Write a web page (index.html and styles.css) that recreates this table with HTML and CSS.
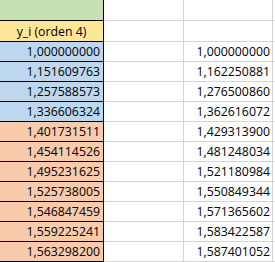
FILE: index.html
```html
<!DOCTYPE html>
<html>
<head>
<meta charset="utf-8">
<link rel="stylesheet" href="styles.css">
</head>
<body>
<div class="sheet">
  <div class="c a green"></div><div class="c b"></div><div class="c d"></div><div class="c e"></div>
  <div class="c a yellow head">y_i (orden 4)</div><div class="c b"></div><div class="c d"></div><div class="c e"></div>

  <div class="c a blue">1,000000000</div><div class="c b"></div><div class="c d">1,000000000</div><div class="c e"></div>
  <div class="c a blue">1,151609763</div><div class="c b"></div><div class="c d">1,162250881</div><div class="c e"></div>
  <div class="c a blue">1,257588573</div><div class="c b"></div><div class="c d">1,276500860</div><div class="c e"></div>
  <div class="c a blue">1,336606324</div><div class="c b"></div><div class="c d">1,362616072</div><div class="c e"></div>
  <div class="c a orange">1,401731511</div><div class="c b"></div><div class="c d">1,429313900</div><div class="c e"></div>
  <div class="c a orange">1,454114526</div><div class="c b"></div><div class="c d">1,481248034</div><div class="c e"></div>
  <div class="c a orange">1,495231625</div><div class="c b"></div><div class="c d">1,521180984</div><div class="c e"></div>
  <div class="c a orange">1,525738005</div><div class="c b"></div><div class="c d">1,550849344</div><div class="c e"></div>
  <div class="c a orange">1,546847459</div><div class="c b"></div><div class="c d">1,571365602</div><div class="c e"></div>
  <div class="c a orange">1,559225241</div><div class="c b"></div><div class="c d">1,583422587</div><div class="c e"></div>
  <div class="c a orange">1,563298200</div><div class="c b"></div><div class="c d">1,587401052</div><div class="c e"></div>
</div>
</body>
</html>
```
FILE: styles.css
```css
html, body {
  margin: 0;
  padding: 0;
  background: #ffffff;
  overflow: hidden;
}
.sheet {
  display: grid;
  grid-template-columns: 104px 80px 89px 10px;
  grid-template-rows: 21px 21px;
  grid-auto-rows: 20px;
  font-family: "Open Sans", "Liberation Sans", sans-serif;
  font-size: 12.3px;
  line-height: 14px;
  color: #000000;
  width: 283px;
}
.c {
  box-sizing: border-box;
  border-right: 1px solid #d4d4d4;
  border-bottom: 1px solid #d4d4d4;
  display: flex;
  align-items: flex-end;
  justify-content: flex-end;
  padding: 0 2px 2px 0;
  white-space: nowrap;
}
.a {
  border-right-color: #000000;
  border-bottom-color: #000000;
  padding-right: 3px;
}
.e { border-right: none; }
.head { justify-content: center; padding-right: 0; }
.green { background: #c6e0b4; }
.yellow { background: #ffe699; }
.blue { background: #bdd7ee; }
.orange { background: #f8cbad; }
```
